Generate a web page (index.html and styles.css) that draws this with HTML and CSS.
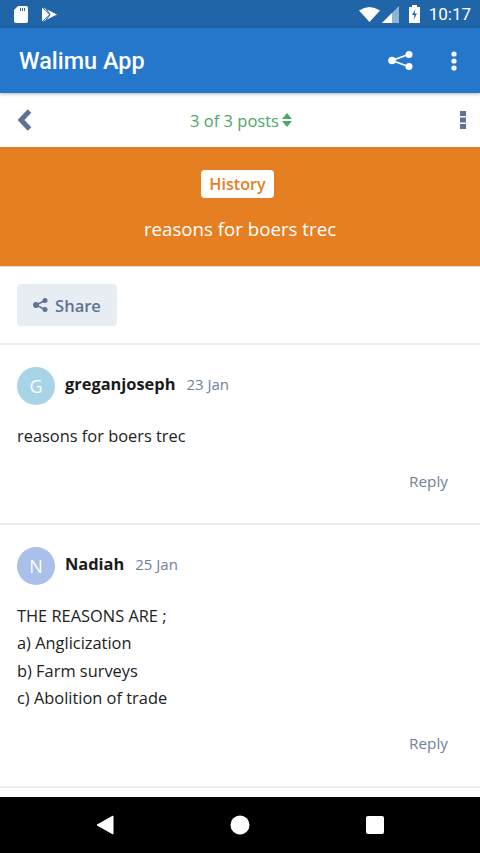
FILE: index.html
```html
<!DOCTYPE html>
<html lang="en">
<head>
  <meta charset="UTF-8" />
  <meta name="viewport" content="width=device-width, initial-scale=1.0" />
  <title>Walimu App</title>
  <link rel="stylesheet" href="styles.css">
</head>
<body>
<div class="phone">
  <div class="status-bar">
    <div class="status-left">
      <svg width="14" height="17" viewBox="0 0 14 17"><path d="M4 0h8a2 2 0 0 1 2 2v13a2 2 0 0 1-2 2H2a2 2 0 0 1-2-2V4z" fill="#fff"/><path d="M6 2h1v3H6zM8 2h1v3H8zM10 2h1v3h-1z" fill="#1f65a8"/></svg>
      <svg width="17" height="17" viewBox="0 0 17 17"><path d="M1 1l15 7.500L1 16z" fill="#fff"/><path d="M1 1l8 7.500L1 16M9 8.500l-4-6M9 8.500l-4 6" fill="none" stroke="#1f65a8" stroke-width="1"/></svg>
    </div>
    <div class="status-right">
      <svg width="21" height="15" viewBox="0 0 21 15"><path d="M0 3.500Q10.500-3.500 21 3.500L10.500 15z" fill="#fff"/></svg>
      <svg class="signal" width="17" height="17" viewBox="0 0 17 17"><path d="M17 0v17H0z" fill="#8fb3d6"/><path d="M10 7v10H0z" fill="#fff"/></svg>
      <svg class="battery" width="11" height="18" viewBox="0 0 11 18"><path d="M3 0h5v2h3v16H0V2h3z" fill="#fff"/><path d="M6.500 4L3 10h2.500L4.500 15 8 8.500H5.500z" fill="#1f65a8"/></svg>
      <span class="clock">10:17</span>
    </div>
  </div>

  <header class="app-bar">
    <span class="app-title">Walimu App</span>
    <div class="app-actions">
      <svg width="25" height="19" viewBox="0 0 25 19"><path d="M20.500 3.500L4 9.500l16.500 6" fill="none" stroke="#fff" stroke-width="1.800"/><circle cx="21" cy="3.500" r="3.500" fill="#fff"/><circle cx="4" cy="9.500" r="3.800" fill="#fff"/><circle cx="21" cy="15.500" r="3.500" fill="#fff"/></svg>
      <svg width="6" height="20" viewBox="0 0 6 20"><circle cx="3" cy="3" r="2.600" fill="#fff"/><circle cx="3" cy="10" r="2.600" fill="#fff"/><circle cx="3" cy="17" r="2.600" fill="#fff"/></svg>
    </div>
  </header>

  <nav class="pager">
    <svg width="15" height="22" viewBox="0 0 15 22"><path d="M12.500 2L4 11l8.500 9" fill="none" stroke="#5f7392" stroke-width="5"/></svg>
    <div class="pager-count">
      <span>3 of 3 posts</span>
      <svg width="10" height="14" viewBox="0 0 10 14"><path d="M5 0l5 6H0zM5 14l5-6H0z" fill="#4ea66a"/></svg>
    </div>
    <svg width="6" height="18" viewBox="0 0 6 18"><path d="M0 0h6v5H0zM0 6.500h6v5H0zM0 13h6v5H0z" fill="#5f7392"/></svg>
  </nav>

  <section class="topic-head">
    <span class="category">History</span>
    <h1 class="topic-title">reasons for boers trec</h1>
  </section>

  <div class="share-row">
    <button class="share-btn">
      <svg width="15" height="14" viewBox="0 0 15 14"><path d="M12 2.500L3 7l9 4.500" fill="none" stroke="#5f7392" stroke-width="1.500"/><circle cx="12" cy="2.500" r="2.500" fill="#5f7392"/><circle cx="3" cy="7" r="3" fill="#5f7392"/><circle cx="12" cy="11.500" r="2.500" fill="#5f7392"/></svg>
      Share
    </button>
  </div>

  <article class="post">
    <div class="post-head">
      <div class="avatar avatar-g">G</div>
      <span class="username">greganjoseph</span>
      <span class="post-date">23 Jan</span>
    </div>
    <div class="post-body">
      <p>reasons for boers trec</p>
    </div>
    <div class="post-foot"><span class="reply">Reply</span></div>
  </article>

  <article class="post">
    <div class="post-head">
      <div class="avatar avatar-n">N</div>
      <span class="username">Nadiah</span>
      <span class="post-date">25 Jan</span>
    </div>
    <div class="post-body">
      <p>THE REASONS ARE ;</p>
      <p>a) Anglicization</p>
      <p>b) Farm surveys</p>
      <p>c) Abolition of trade</p>
    </div>
    <div class="post-foot"><span class="reply">Reply</span></div>
  </article>

  <div class="spacer"></div>

  <div class="nav-bar">
    <svg width="18" height="20" viewBox="0 0 18 20"><path d="M17 1v18L1 10z" fill="#fff" stroke="#fff" stroke-linejoin="round"/></svg>
    <svg width="20" height="20" viewBox="0 0 20 20"><circle cx="10" cy="10" r="9.500" fill="#fff"/></svg>
    <svg width="18" height="18" viewBox="0 0 18 18"><rect width="18" height="18" rx="2" fill="#fff"/></svg>
  </div>
</div>
</body>
</html>
```

FILE: styles.css
```css
* {
  box-sizing: border-box;
}

html, body {
  margin: 0;
  padding: 0;
}

body {
  font-family: "Open Sans", sans-serif;
  color: #222;
  background-color: #fff;
}

.phone {
  width: 480px;
  height: 853px;
  display: flex;
  flex-direction: column;
  overflow: hidden;
}

.status-bar {
  height: 28px;
  background-color: #1f65a8;
  display: flex;
  align-items: center;
  justify-content: space-between;
  padding: 0 9px 0 14px;
  flex-shrink: 0;
}

.status-left, .status-right {
  display: flex;
  align-items: center;
}

.status-left {
  gap: 13px;
}

.status-right .signal {
  margin-left: 2px;
  margin-right: 10px;
}

.clock {
  font-family: Roboto, sans-serif;
  font-size: 17px;
  color: #fff;
  margin-left: 9px;
}

.app-bar {
  height: 65px;
  background-color: #2577cb;
  box-shadow: 0 1px 3px rgba(0, 0, 0, 0.3);
  display: flex;
  align-items: center;
  justify-content: space-between;
  padding: 0 23px 0 19px;
  flex-shrink: 0;
  position: relative;
}

.app-title {
  font-family: Roboto, sans-serif;
  font-weight: 500;
  font-size: 23.400px;
  color: #fff;
}

.app-actions {
  display: flex;
  align-items: center;
  gap: 38px;
}

.pager {
  height: 54px;
  display: flex;
  align-items: center;
  justify-content: space-between;
  padding: 0 14px 0 17px;
  flex-shrink: 0;
}

.pager-count {
  display: flex;
  align-items: center;
  gap: 3px;
  color: #4ea66a;
  font-size: 16.500px;
  margin-right: 10px;
}

.topic-head {
  height: 120px;
  background-color: #e67e22;
  display: flex;
  flex-direction: column;
  align-items: center;
  padding-top: 23px;
  border-bottom: 1px solid #ddd;
  flex-shrink: 0;
}

.category {
  background-color: #fff;
  color: #e67e22;
  font-weight: 600;
  font-size: 16.200px;
  line-height: 28px;
  padding: 0 8px;
  border-radius: 4px;
  margin-right: 5px;
}

.topic-title {
  margin: 18px 0 0;
  font-weight: 400;
  font-size: 18.700px;
  line-height: 26px;
  color: #fff;
}

.share-row {
  height: 78px;
  padding: 17px;
  border-bottom: 2px solid #eee;
  flex-shrink: 0;
}

.share-btn {
  height: 42px;
  width: 100px;
  border: none;
  border-radius: 4px;
  background-color: #e8edf3;
  color: #5f7392;
  font-family: "Open Sans", sans-serif;
  font-weight: 600;
  font-size: 16.500px;
  display: flex;
  align-items: center;
  justify-content: center;
  gap: 7px;
  padding: 0;
}

.post {
  padding: 22px 32px 0 17px;
  border-bottom: 2px solid #eee;
  flex-shrink: 0;
}

.post-head {
  display: flex;
  align-items: center;
  height: 38px;
}

.avatar {
  width: 38px;
  height: 38px;
  border-radius: 50%;
  color: #fff;
  opacity: 0.95;
  font-size: 18px;
  display: flex;
  align-items: center;
  justify-content: center;
  margin-right: 10px;
}

.avatar-g {
  background-color: #a3d2e6;
}

.avatar-n {
  background-color: #a6bce8;
}

.username {
  font-weight: 700;
  font-size: 16.400px;
  color: #1a1a1a;
  margin: 0 11px 5px 0;
}

.post-date {
  font-size: 15px;
  color: #6f819b;
  margin-bottom: 5px;
}

.post-body {
  margin-top: 16.500px;
  font-size: 16.400px;
  line-height: 27.500px;
  color: #222;
}

.post-body p {
  margin: 0;
}

.post-foot {
  margin-top: 18.500px;
  height: 55.500px;
  text-align: right;
}

.reply {
  font-size: 15.300px;
  line-height: 27px;
  color: #6f819b;
}

.spacer {
  flex: 1;
}

.nav-bar {
  height: 56px;
  background-color: #000;
  display: flex;
  align-items: center;
  justify-content: space-between;
  padding: 0 96px;
  flex-shrink: 0;
}
```
